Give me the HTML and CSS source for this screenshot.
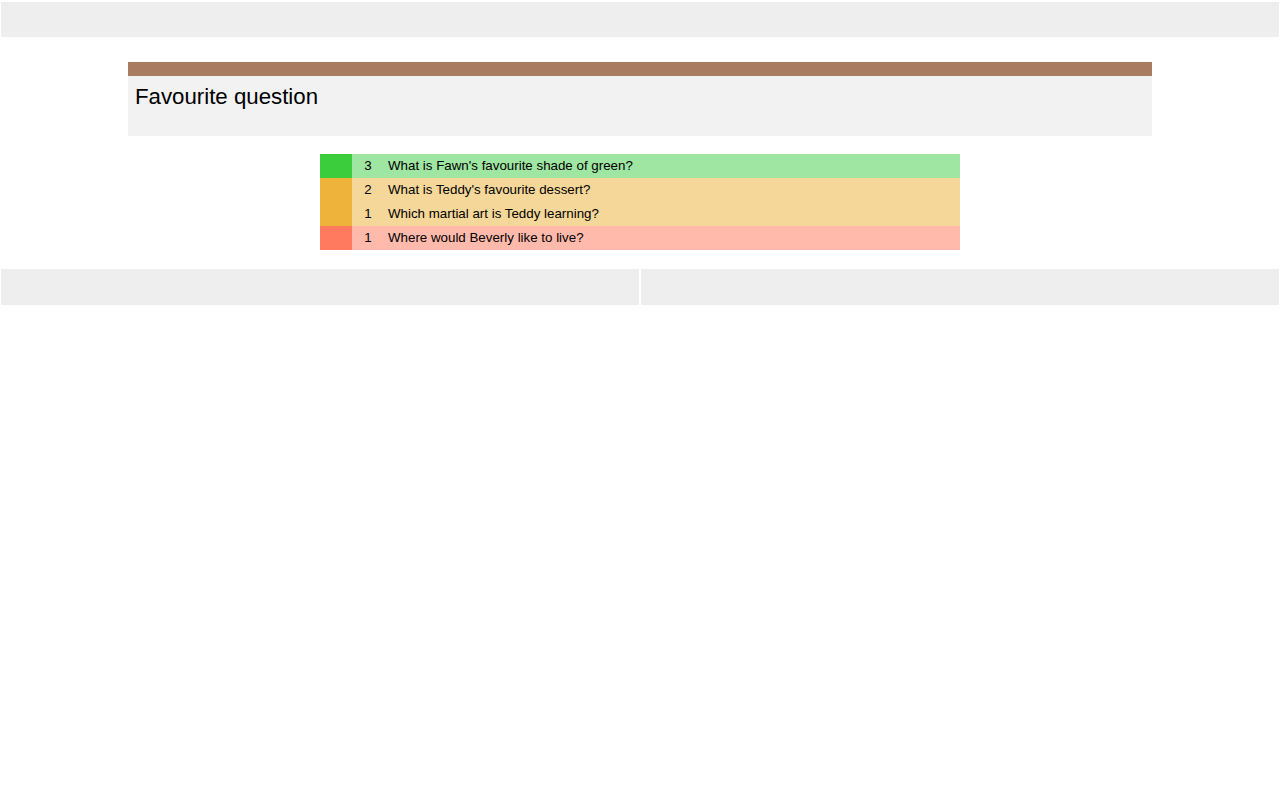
FILE: index.html
```html
<!DOCTYPE html>
<html>
<head>
<meta charset="utf-8">
<link rel="stylesheet" href="styles.css">
</head>
<body>
<div class="topbar"></div>
<div class="card">
  <div class="card-stripe"></div>
  <div class="card-body">
    <h1 class="card-title">Favourite question</h1>
  </div>
</div>
<div class="qlist">
  <div class="group group-green">
    <div class="swatch"></div>
    <div class="rows">
      <div class="row"><span class="num">3</span><span class="q">What is Fawn's favourite shade of green?</span></div>
    </div>
  </div>
  <div class="group group-orange">
    <div class="swatch"></div>
    <div class="rows">
      <div class="row"><span class="num">2</span><span class="q">What is Teddy's favourite dessert?</span></div>
      <div class="row"><span class="num">1</span><span class="q">Which martial art is Teddy learning?</span></div>
    </div>
  </div>
  <div class="group group-red">
    <div class="swatch"></div>
    <div class="rows">
      <div class="row"><span class="num">1</span><span class="q">Where would Beverly like to live?</span></div>
    </div>
  </div>
</div>
<div class="footer">
  <div class="panel"></div>
  <div class="panel"></div>
</div>
</body>
</html>
```

FILE: styles.css
```css
html, body {
  margin: 0;
  padding: 0;
  background: #ffffff;
  font-family: "Liberation Sans", Arial, sans-serif;
  color: #000;
}
body {
  padding: 2px 1px 0 1px;
}
.topbar {
  height: 35px;
  background: #eeeeee;
}
.card {
  margin: 25px 127px 0 127px;
}
.card-stripe {
  height: 14px;
  background: #a97c62;
}
.card-body {
  height: 60px;
  background: #f2f2f2;
  padding: 0 7px;
  box-sizing: border-box;
}
.card-title {
  margin: 0;
  padding-top: 8px;
  font-size: 22.25px;
  font-weight: normal;
  line-height: 25px;
}
.qlist {
  width: 640px;
  margin: 18px auto 0 auto;
  font-size: 13.33px;
}
.group {
  display: flex;
}
.swatch {
  width: 32px;
  flex: none;
}
.rows {
  flex: 1;
}
.row {
  display: flex;
  height: 24px;
  align-items: center;
  padding-bottom: 2px;
  box-sizing: border-box;
}
.num {
  width: 32px;
  text-align: center;
}
.q {
  padding-left: 4px;
}
.group-green .swatch { background: #3ccd3d; }
.group-green .rows { background: #9ee6a1; }
.group-orange .swatch { background: #eeb33b; }
.group-orange .rows { background: #f5d79a; }
.group-red .swatch { background: #ff7a5e; }
.group-red .rows { background: #ffbaac; }
.footer {
  margin-top: 19px;
  display: flex;
  gap: 2px;
}
.panel {
  flex: 1;
  height: 36px;
  background: #eeeeee;
}
```
